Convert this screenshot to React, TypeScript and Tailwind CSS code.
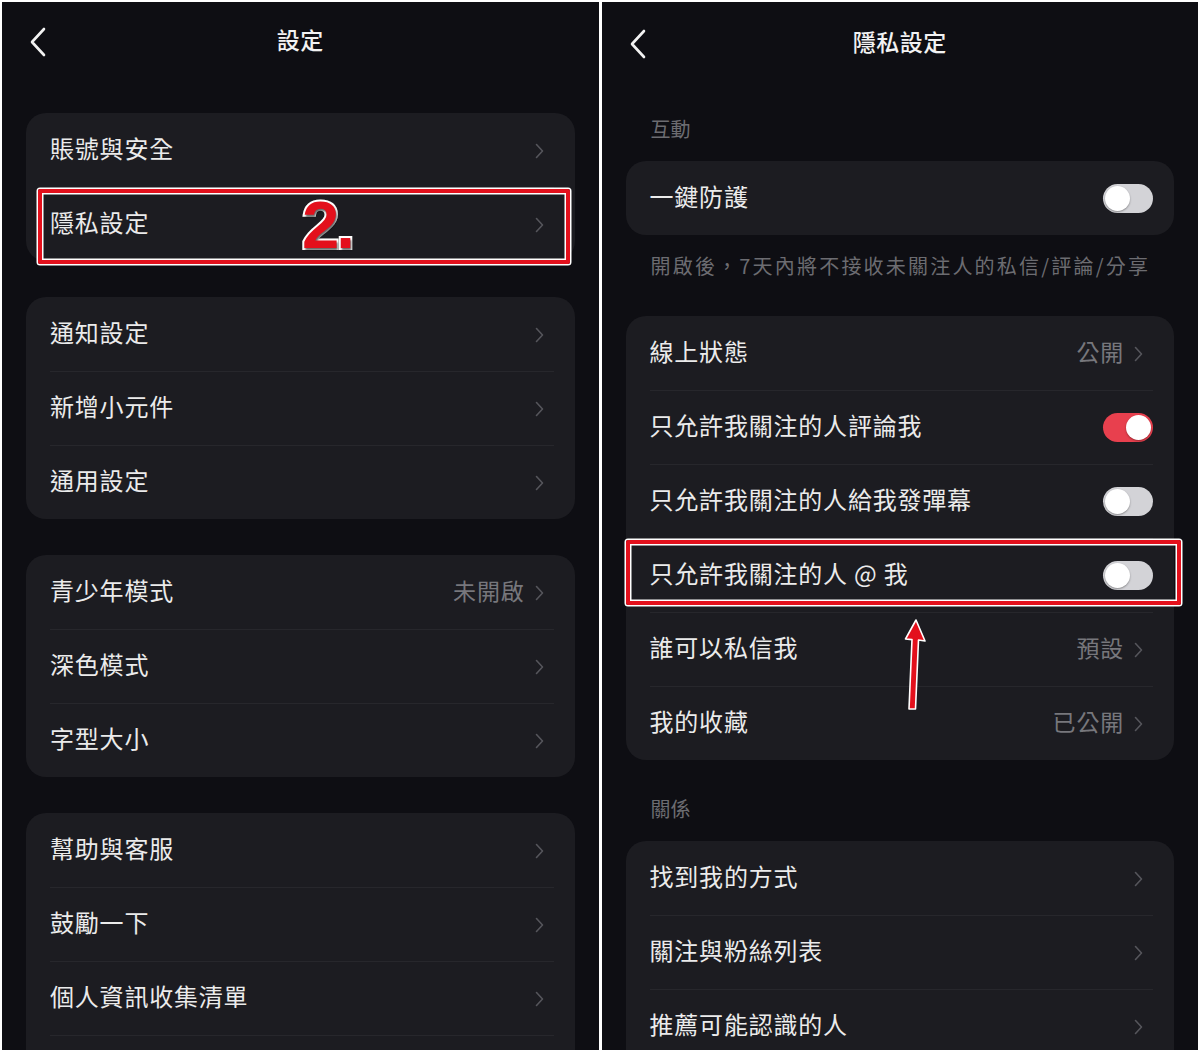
import React from 'react';

type Row = {
  label: string;
  value?: string;
  toggle?: 'on' | 'off';
};

const BackIcon = () => (
  <svg width="18" height="30" viewBox="0 0 18 30" fill="none">
    <polyline
      points="15,2 3,15 15,28"
      stroke="#f2f2f2"
      strokeWidth="2.6"
      strokeLinecap="round"
      strokeLinejoin="round"
    />
  </svg>
);

const Chevron = () => (
  <svg width="9" height="16" viewBox="0 0 9 16" fill="none" className="mr-[10px] shrink-0">
    <polyline
      points="1.5,1.5 7.5,8 1.5,14.5"
      stroke="#55555b"
      strokeWidth="1.6"
      strokeLinecap="round"
      strokeLinejoin="round"
    />
  </svg>
);

const Toggle = ({ on }: { on: boolean }) => (
  <div
    className={`flex h-[29px] w-[50px] items-center rounded-full p-[2px] ${
      on ? 'justify-end bg-[#e8404e]' : 'justify-start bg-[#d3d3d7]'
    }`}
  >
    <div className="h-[25px] w-[25px] rounded-full bg-white shadow-[0_1px_2px_rgba(0,0,0,0.35)]" />
  </div>
);

const Card = ({ rows }: { rows: Row[] }) => (
  <div className="overflow-hidden rounded-[20px] bg-[#1c1c21]">
    {rows.map((row, i) => (
      <div
        key={row.label || `empty-${i}`}
        className={`ml-[24px] mr-[21px] flex h-[74px] items-center border-t ${
          i === 0 ? 'border-transparent' : 'border-[#27272c]'
        }`}
      >
        <span className="flex-1 pb-[5px] text-[24px] tracking-[0.8px] text-[#ebebeb]">{row.label}</span>
        {row.toggle ? (
          <Toggle on={row.toggle === 'on'} />
        ) : row.label ? (
          <>
            {row.value && (
              <span className="mr-[10px] pb-[5px] text-[23px] tracking-[0.8px] text-[#77777c]">{row.value}</span>
            )}
            <Chevron />
          </>
        ) : null}
      </div>
    ))}
  </div>
);

const Header = ({ title, tall }: { title: string; tall?: boolean }) => (
  <div className={`relative flex items-center justify-center ${tall ? 'h-[84px]' : 'h-[80px]'}`}>
    <div className="absolute left-[27px] top-1/2 -translate-y-1/2">
      <BackIcon />
    </div>
    <span className="pb-[5px] text-[23px] font-medium tracking-[0.5px] text-[#f2f2f2]">{title}</span>
  </div>
);

const RedBox = ({ className }: { className: string }) => (
  <div
    className={`pointer-events-none absolute rounded-[2px] border-[4px] border-[#e3101c] shadow-[0_0_0_1.5px_#ffffff,inset_0_0_0_1.5px_#ffffff] ${className}`}
  />
);

const SettingsPanel = () => (
  <div className="relative h-full overflow-hidden bg-[#0e0e13]">
    <Header title="設定" />
    <div className="mx-[24px] mt-[31px] flex flex-col gap-[36px]">
      <Card rows={[{ label: '賬號與安全' }, { label: '隱私設定' }]} />
      <Card rows={[{ label: '通知設定' }, { label: '新增小元件' }, { label: '通用設定' }]} />
      <Card rows={[{ label: '青少年模式', value: '未開啟' }, { label: '深色模式' }, { label: '字型大小' }]} />
      <Card
        rows={[
          { label: '幫助與客服' },
          { label: '鼓勵一下' },
          { label: '個人資訊收集清單' },
          { label: '' },
        ]}
      />
    </div>
    <RedBox className="left-[36px] top-[187px] h-[75px] w-[532px]" />
    <span className="absolute left-[300px] top-[189px] font-['Liberation_Sans',sans-serif] text-[67px] font-bold leading-none tracking-[-3px] text-[#e3101c] [-webkit-text-stroke:4px_#ffffff] [paint-order:stroke_fill] [text-shadow:1px_2px_2px_rgba(0,0,0,0.6)]">
      2.
    </span>
  </div>
);

const PrivacyPanel = () => (
  <div className="relative h-full overflow-hidden bg-[#0e0e13]">
    <Header title="隱私設定" tall />
    <div className="mx-[24px]">
      <div className="ml-[25px] mt-[29px] h-[28px] text-[20px] leading-[28px] text-[#6c6c71]">互動</div>
      <div className="mt-[18px]">
        <Card rows={[{ label: '一鍵防護', toggle: 'off' }]} />
      </div>
      <div className="ml-[25px] mt-[18px] h-[28px] text-[20px] leading-[26px] tracking-[2.2px] text-[#6c6c71]">
        開啟後，7天內將不接收未關注人的私信/評論/分享
      </div>
      <div className="mt-[35px]">
        <Card
          rows={[
            { label: '線上狀態', value: '公開' },
            { label: '只允許我關注的人評論我', toggle: 'on' },
            { label: '只允許我關注的人給我發彈幕', toggle: 'off' },
            { label: '只允許我關注的人 @ 我', toggle: 'off' },
            { label: '誰可以私信我', value: '預設' },
            { label: '我的收藏', value: '已公開' },
          ]}
        />
      </div>
      <div className="ml-[25px] mt-[35px] h-[28px] text-[20px] leading-[28px] text-[#6c6c71]">關係</div>
      <div className="mt-[18px]">
        <Card
          rows={[
            { label: '找到我的方式' },
            { label: '關注與粉絲列表' },
            { label: '推薦可能認識的人' },
            { label: '' },
          ]}
        />
      </div>
    </div>
    <RedBox className="left-[24px] top-[538px] h-[65px] w-[555px]" />
    <svg
      className="pointer-events-none absolute left-[293px] top-[612px]"
      width="36"
      height="100"
      viewBox="0 0 36 100"
      fill="none"
    >
      <path
        d="M21 6 L30 27 L23.5 26 L20.5 95 L14 95 L17 25.6 L10.5 25 Z"
        fill="#e3101c"
        stroke="#ffffff"
        strokeWidth="1.6"
        strokeLinejoin="round"
      />
    </svg>
  </div>
);

export default function App() {
  return (
    <div className="h-[1050px] w-[1200px] overflow-hidden bg-white px-[2px] pt-[2px] font-['Noto_Sans_CJK_TC','Noto_Sans',sans-serif]">
      <div className="grid h-full grid-cols-2 gap-[3px]">
        <SettingsPanel />
        <PrivacyPanel />
      </div>
    </div>
  );
}
